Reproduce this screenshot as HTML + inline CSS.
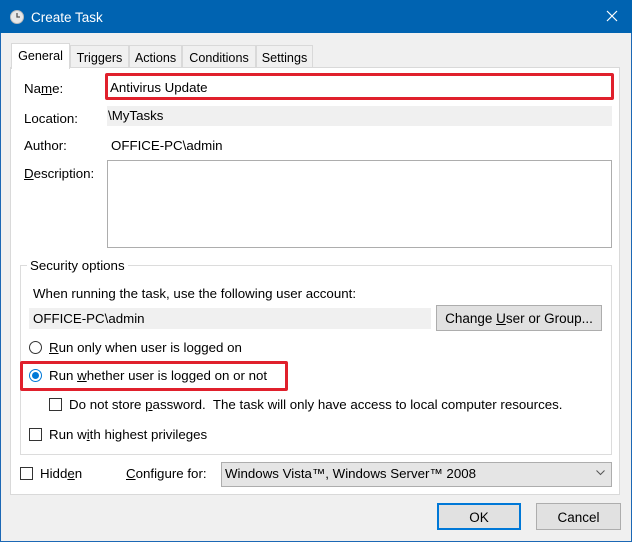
<!DOCTYPE html>
<html><head><style>
*{margin:0;padding:0;box-sizing:border-box}
body{width:632px;height:542px;background:#f0f0f0;font-family:"Liberation Sans",sans-serif;font-size:13.3px;color:#000;position:relative;overflow:hidden}
.a{position:absolute;white-space:nowrap}
.win{position:absolute;left:0;top:0;width:632px;height:542px;border:1px solid #1c68b5}
.title{position:absolute;left:0;top:0;width:632px;height:33px;background:#0063b1;color:#fff;font-size:13.5px}
.panel{position:absolute;left:10px;top:67px;width:610px;height:428px;background:#fff;border:1px solid #d9d9d9}
.tab{position:absolute;top:45px;height:23px;border:1px solid #d9d9d9;background:#f0f0f0;padding-top:5px;text-align:center;font-size:12.6px;white-space:nowrap}
.fld{position:absolute;background:#f0f0f0}
.btn{position:absolute;background:#e1e1e1;border:1px solid #adadad;text-align:center;font-size:13.5px}
.cb{position:absolute;width:13px;height:13px;border:1px solid #333;background:#fff}
.rb{position:absolute;width:13px;height:13px;border:1px solid #333;border-radius:50%;background:#fff}
u{text-decoration:underline}
.red{position:absolute;border:3px solid #e0202c;border-radius:2px}
</style></head><body>
<div class="win"></div>
<div class="title">
<svg class="a" style="left:10px;top:10px" width="14" height="14" viewBox="0 0 14 14"><circle cx="7" cy="7" r="6.5" fill="#e8e8e8" stroke="#bbb"/><path d="M7 3v4h3" stroke="#555" stroke-width="1.3" fill="none"/></svg>
<span class="a" style="left:31px;top:10px">Create Task</span>
<svg class="a" style="left:606px;top:10px" width="12" height="12" viewBox="0 0 12 12"><path d="M1 1L11 11M11 1L1 11" stroke="#fff" stroke-width="1.2"/></svg>
</div>
<div class="panel"></div>
<div class="tab" style="left:70px;width:59px">Triggers</div>
<div class="tab" style="left:129px;width:53px">Actions</div>
<div class="tab" style="left:182px;width:74px">Conditions</div>
<div class="tab" style="left:256px;width:57px">Settings</div>
<div class="tab" style="left:11px;top:43px;width:59px;height:26px;background:#fff;border-bottom:none">General</div>

<span class="a" style="left:24px;top:81px">Na<u>m</u>e:</span>
<div class="red" style="left:105px;top:73px;width:509px;height:27px;background:#fff"></div>
<span class="a" style="left:110px;top:80px">Antivirus Update</span>
<span class="a" style="left:24px;top:111px">Location:</span>
<div class="fld" style="left:107px;top:106px;width:505px;height:20px"></div>
<span class="a" style="left:108px;top:108px">\MyTasks</span>
<span class="a" style="left:24px;top:138px">Author:</span>
<span class="a" style="left:111px;top:138px">OFFICE-PC\admin</span>
<span class="a" style="left:24px;top:166px"><u>D</u>escription:</span>
<div class="a" style="left:107px;top:160px;width:505px;height:88px;border:1px solid #adadad;background:#fff"></div>

<div class="a" style="left:20px;top:265px;width:592px;height:190px;border:1px solid #dcdcdc"></div>
<span class="a" style="left:27px;top:258px;background:#fff;padding:0 3px">Security options</span>
<span class="a" style="left:33px;top:286px">When running the task, use the following user account:</span>
<div class="fld" style="left:29px;top:308px;width:402px;height:21px"></div>
<span class="a" style="left:33px;top:311px">OFFICE-PC\admin</span>
<div class="btn" style="left:436px;top:305px;width:166px;height:26px;padding-top:5px">Change <u>U</u>ser or Group...</div>
<div class="rb" style="left:29px;top:341px"></div>
<span class="a" style="left:49px;top:340px"><u>R</u>un only when user is logged on</span>
<div class="red" style="left:20px;top:361px;width:268px;height:30px"></div>
<div class="rb" style="left:29px;top:369px;border-color:#0078d7"><div style="position:absolute;left:2px;top:2px;width:7px;height:7px;border-radius:50%;background:#0078d7"></div></div>
<span class="a" style="left:49px;top:368px">Run <u>w</u>hether user is logged on or not</span>
<div class="cb" style="left:49px;top:398px"></div>
<span class="a" style="left:69px;top:397px">Do not store <u>p</u>assword.&nbsp; The task will only have access to local computer resources.</span>
<div class="cb" style="left:29px;top:428px"></div>
<span class="a" style="left:49px;top:427px">Run w<u>i</u>th highest privileges</span>

<div class="cb" style="left:20px;top:467px"></div>
<span class="a" style="left:40px;top:466px">Hidd<u>e</u>n</span>
<span class="a" style="left:126px;top:466px"><u>C</u>onfigure for:</span>
<div class="a" style="left:221px;top:462px;width:391px;height:25px;background:#e5e5e5;border:1px solid #adadad"></div>
<span class="a" style="left:225px;top:466px">Windows Vista™, Windows Server™ 2008</span>
<svg class="a" style="left:596px;top:470px" width="9" height="6" viewBox="0 0 9 6"><path d="M0.5 0.5L4.5 4.5L8.5 0.5" stroke="#555" fill="none"/></svg>

<div class="btn" style="left:437px;top:503px;width:84px;height:27px;border:2px solid #0078d7;padding-top:5px">OK</div>
<div class="btn" style="left:536px;top:503px;width:85px;height:27px;padding-top:6px">Cancel</div>
</body></html>
